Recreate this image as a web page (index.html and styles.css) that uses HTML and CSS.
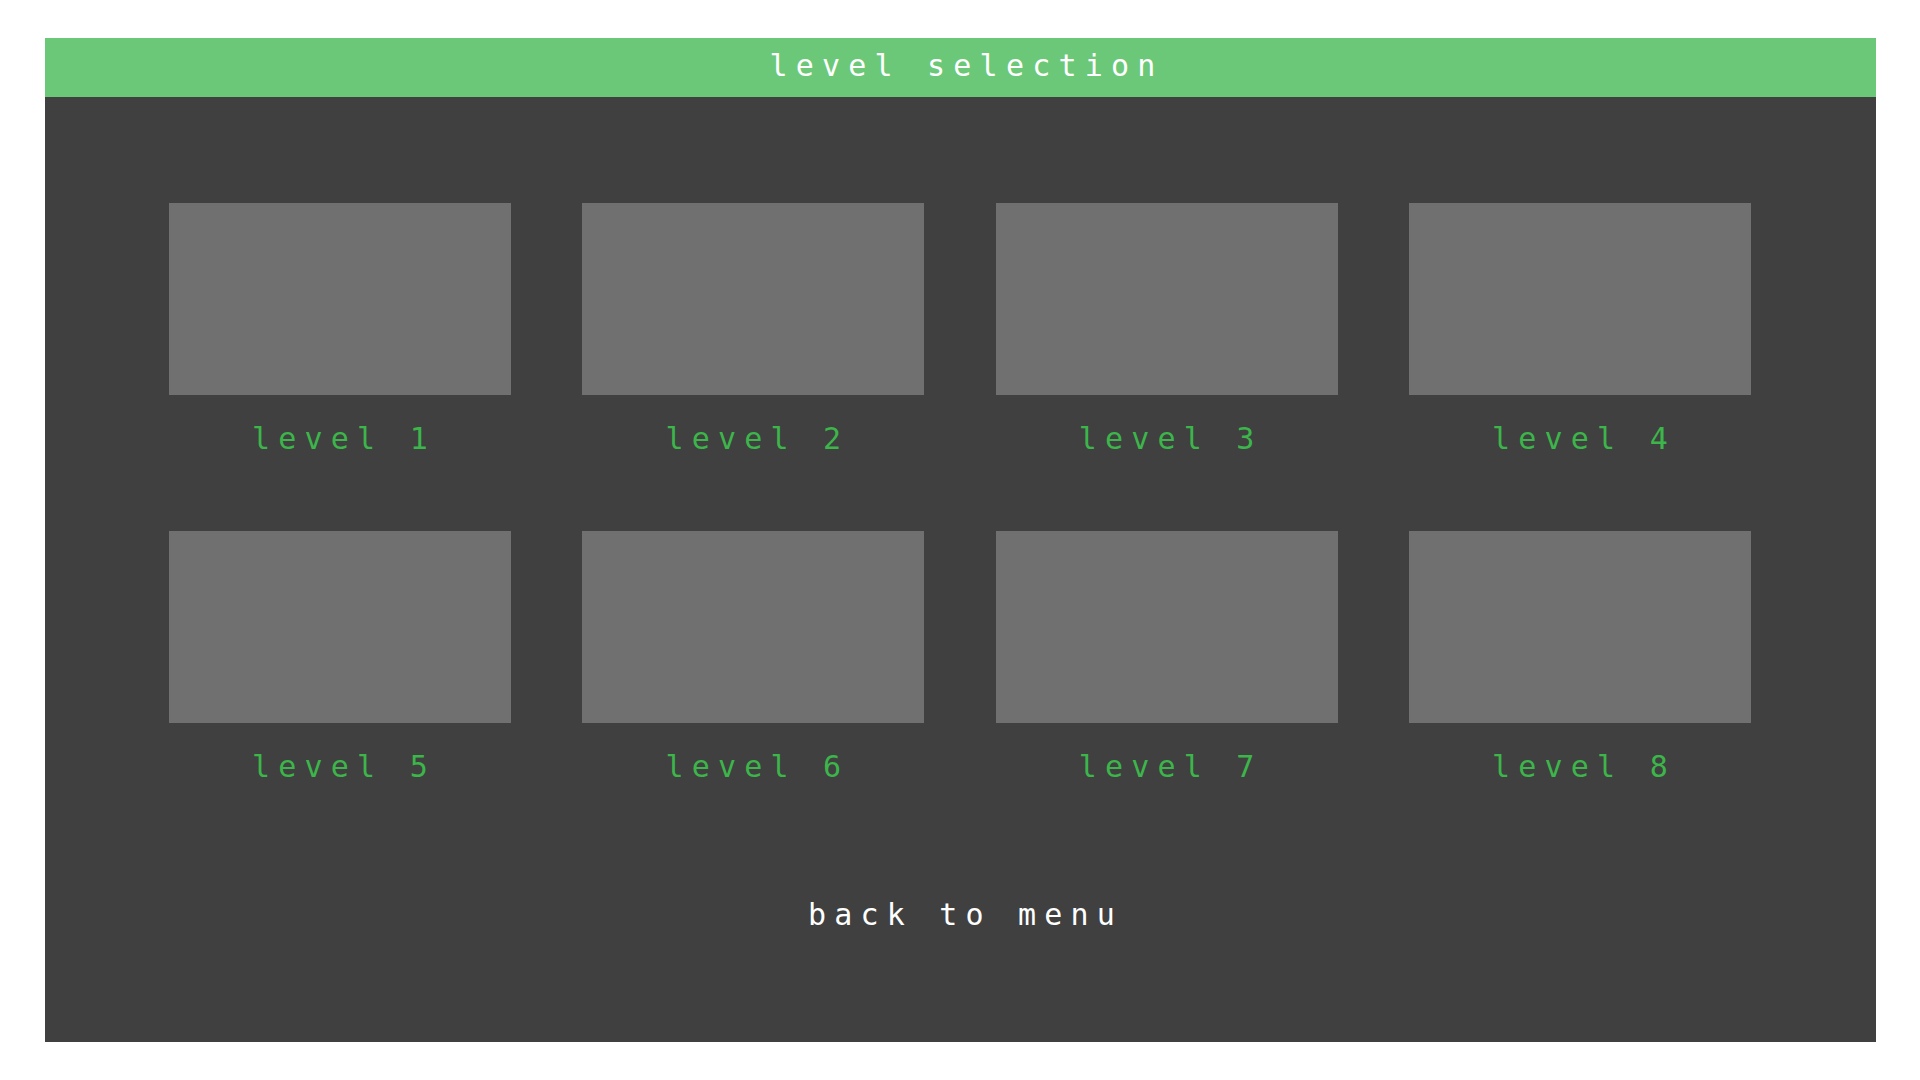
FILE: index.html
```html
<!DOCTYPE html>
<html>

<head>
  <title>Level Selection</title>
  <link rel="stylesheet" href="styles.css">
</head>

<body>
  <div class="screen">
    <div class="title-bar">level selection</div>

    <div class="level-grid">
      <div class="level">
        <div class="thumb"></div>
        <div class="level-name">level 1</div>
      </div>
      <div class="level">
        <div class="thumb"></div>
        <div class="level-name">level 2</div>
      </div>
      <div class="level">
        <div class="thumb"></div>
        <div class="level-name">level 3</div>
      </div>
      <div class="level">
        <div class="thumb"></div>
        <div class="level-name">level 4</div>
      </div>
      <div class="level">
        <div class="thumb"></div>
        <div class="level-name">level 5</div>
      </div>
      <div class="level">
        <div class="thumb"></div>
        <div class="level-name">level 6</div>
      </div>
      <div class="level">
        <div class="thumb"></div>
        <div class="level-name">level 7</div>
      </div>
      <div class="level">
        <div class="thumb"></div>
        <div class="level-name">level 8</div>
      </div>
    </div>

    <div class="back-button">back to menu</div>
  </div>
</body>

</html>
```

FILE: styles.css
```css
body {
  margin: 0;
  background-color: #ffffff;
  font-family: "DejaVu Sans Mono", "Liberation Mono", monospace;
}

.screen {
  margin: 38px 44px 0 45px;
  height: 1004px;
  background-color: #404040;
  display: flex;
  flex-direction: column;
}

.title-bar {
  height: 59px;
  line-height: 55px;
  background-color: #6bc878;
  color: #ffffff;
  font-size: 30px;
  letter-spacing: 8.2px;
  text-align: center;
  padding-left: 12px;
}

.level-grid {
  display: grid;
  grid-template-columns: repeat(4, 342px);
  justify-content: space-between;
  row-gap: 75px;
  padding: 106px 125px 0 124px;
}

.level {
  display: flex;
  flex-direction: column;
}

.thumb {
  height: 192px;
  background-color: #707070;
}

.level-name {
  margin-top: 26px;
  height: 35px;
  line-height: 35px;
  color: #3cb54a;
  font-size: 30px;
  letter-spacing: 8.2px;
  text-align: center;
  padding-left: 8px;
}

.back-button {
  margin-top: 113px;
  line-height: 35px;
  color: #ffffff;
  font-size: 30px;
  letter-spacing: 8.2px;
  text-align: center;
  padding-left: 10px;
  cursor: pointer;
}
```
